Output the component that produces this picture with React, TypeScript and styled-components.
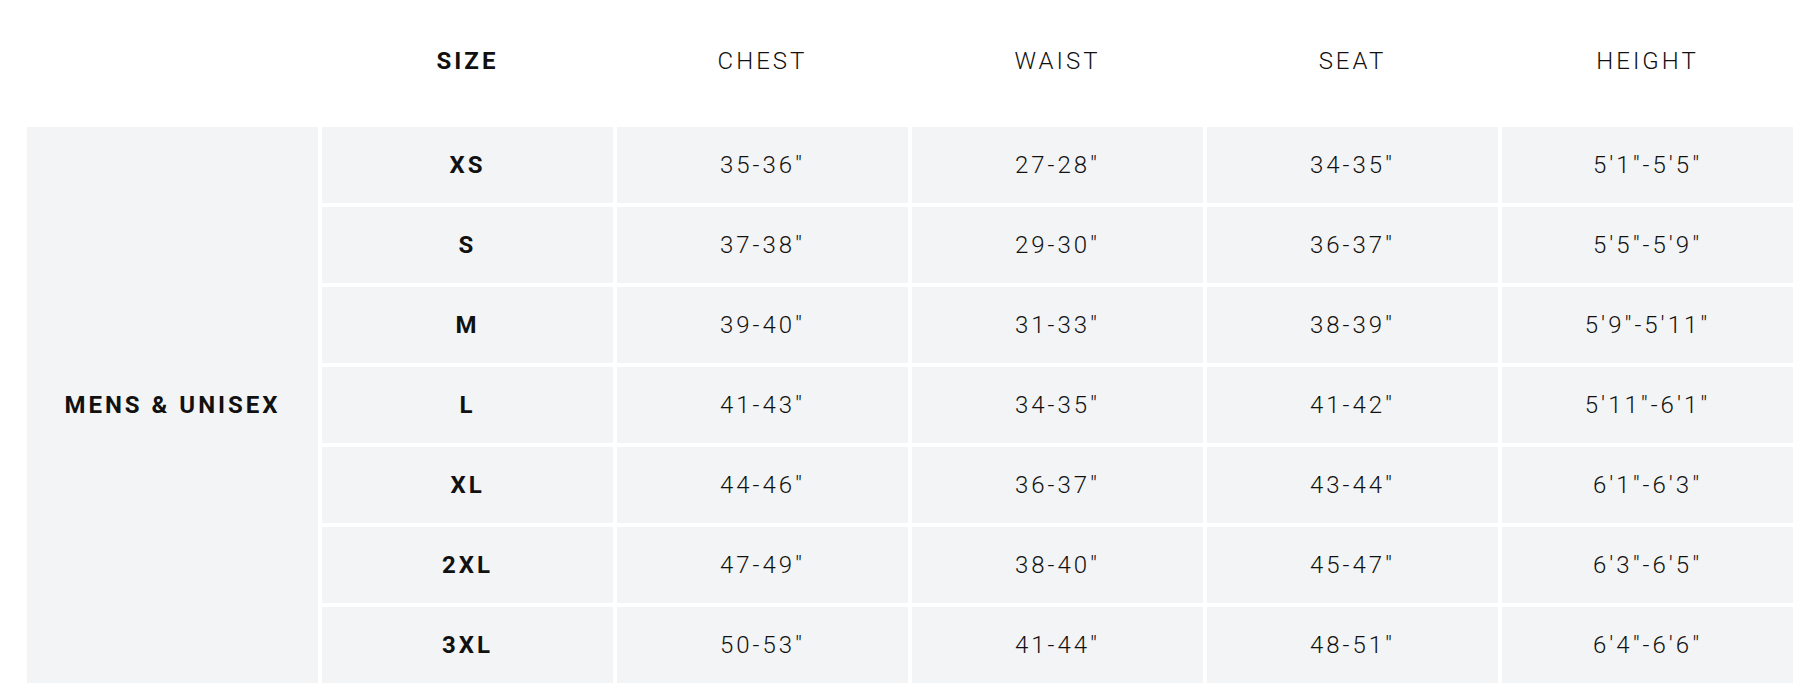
import React from "react";
import styled, { createGlobalStyle } from "styled-components";

const Global = createGlobalStyle`
  html, body { margin: 0; padding: 0; background: #ffffff; }
  body { font-family: Roboto, "Liberation Sans", sans-serif; color: #111111; }
`;

const Page = styled.div`
  padding: 0 27px;
`;

const Grid = styled.div`
  display: grid;
  grid-template-columns: repeat(6, 1fr);
  grid-template-rows: 122.67px repeat(7, 76px);
  gap: 4px;
`;

const HeadCell = styled.div<{ $bold?: boolean }>`
  display: flex;
  align-items: center;
  justify-content: center;
  font-size: 24px;
  font-weight: ${(p) => (p.$bold ? 700 : 300)};
  letter-spacing: 3px;
  color: #111111;
`;

const GroupCell = styled.div`
  grid-row: 2 / span 7;
  background: #f3f4f6;
  display: flex;
  align-items: center;
  justify-content: center;
  font-size: 24px;
  font-weight: 700;
  letter-spacing: 3px;
  color: #111111;
`;

const Cell = styled.div<{ $bold?: boolean }>`
  background: #f3f4f6;
  display: flex;
  align-items: center;
  justify-content: center;
  font-size: 24px;
  font-weight: ${(p) => (p.$bold ? 700 : 300)};
  letter-spacing: 3px;
  color: #111111;
`;

const rows = [
  ["XS", '35-36"', '27-28"', '34-35"', `5'1"-5'5"`],
  ["S", '37-38"', '29-30"', '36-37"', `5'5"-5'9"`],
  ["M", '39-40"', '31-33"', '38-39"', `5'9"-5'11"`],
  ["L", '41-43"', '34-35"', '41-42"', `5'11"-6'1"`],
  ["XL", '44-46"', '36-37"', '43-44"', `6'1"-6'3"`],
  ["2XL", '47-49"', '38-40"', '45-47"', `6'3"-6'5"`],
  ["3XL", '50-53"', '41-44"', '48-51"', `6'4"-6'6"`],
];

export default function App() {
  return (
    <Page>
      <Global />
      <Grid>
        <HeadCell />
        <HeadCell $bold>SIZE</HeadCell>
        <HeadCell>CHEST</HeadCell>
        <HeadCell>WAIST</HeadCell>
        <HeadCell>SEAT</HeadCell>
        <HeadCell>HEIGHT</HeadCell>
        <GroupCell>MENS &amp; UNISEX</GroupCell>
        {rows.map((r) =>
          r.map((v, i) => (
            <Cell key={r[0] + i} $bold={i === 0}>
              {v}
            </Cell>
          ))
        )}
      </Grid>
    </Page>
  );
}
